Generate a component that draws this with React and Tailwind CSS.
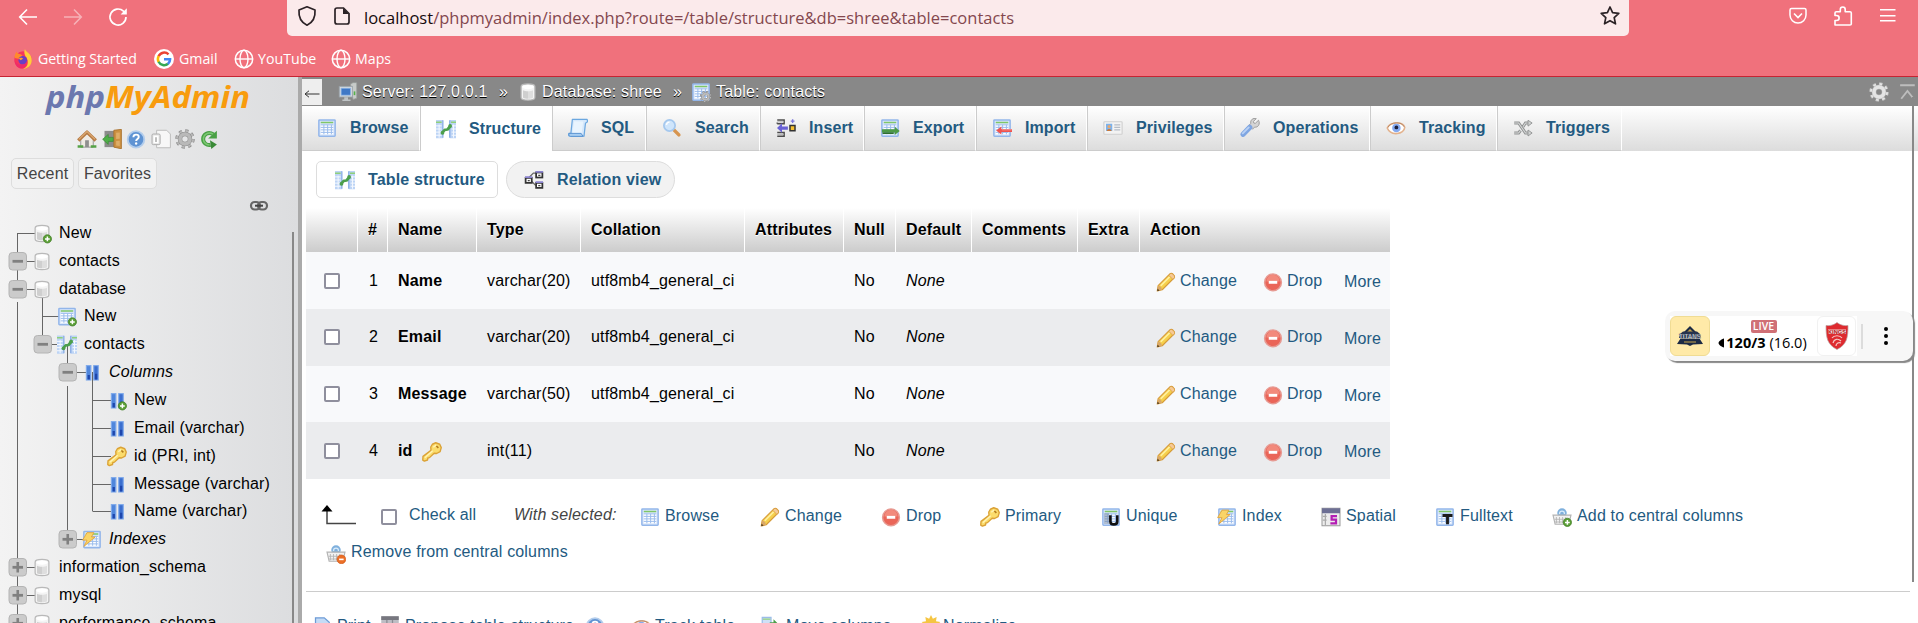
import React from "react";

/* ---------- icons (16-unit grid, drawn at 20px) ---------- */
function Svg({ children, className = "h-5 w-5", box = "0 0 16 16" }) {
  return (
    <svg viewBox={box} className={"shrink-0 " + className} fill="none">
      {children}
    </svg>
  );
}

const Grid = () => (
  <>
    <rect x="1.500" y="1.500" width="13" height="13" rx=".5" fill="#dbe8fb" stroke="#93b6ea" strokeWidth="1.200" />
    <path d="M3 3.600h10" stroke="#7fc668" strokeWidth="1.200" />
    <rect x="3" y="5.400" width="10" height="7.600" fill="#fff" />
    <path d="M3 7.500h10M3 9.500h10M3 11.500h10M5.500 5.400V13M8.500 5.400V13M11.500 5.400V13M3 5.500h10" stroke="#9bbcec" strokeWidth=".8" />
  </>
);
const Plus = () => (
  <>
    <circle cx="12.300" cy="12.300" r="3.300" fill="#5a9e35" stroke="#437f27" strokeWidth=".6" />
    <path d="M12.300 10.400v3.800M10.400 12.300h3.800" stroke="#fff" strokeWidth="1.200" />
  </>
);
const Cyl = () => (
  <>
    <path d="M2.500 3.600C2.500 2.300 5 1.500 8 1.500s5.500.8 5.500 2.100v8.800c0 1.300-2.500 2.100-5.500 2.100s-5.500-.8-5.500-2.100z" fill="#f4f4f4" stroke="#b9b9b9" strokeWidth="1" />
    <path d="M4 6.500v6c1 .6 2.500.9 4 .9V7.300c-1.500 0-3-.3-4-.8z" fill="#cfcfcf" />
    <path d="M8 7.300v6.100c1.500 0 3-.3 4-.9v-6c-1 .5-2.500.8-4 .8z" fill="#dedede" />
    <ellipse cx="8" cy="4" rx="4.600" ry="1.700" fill="#fff" />
  </>
);
const Cols = () => (
  <>
    <rect x="3.500" y="2.500" width="3.600" height="11.500" fill="#4f86dc" stroke="#7fa9ea" strokeWidth=".9" />
    <rect x="9.400" y="2.500" width="3.600" height="11.500" fill="#3b6fcf" stroke="#7fa9ea" strokeWidth=".9" />
    <path d="M4.500 10h1.800v3.500H4.500zM10.400 9h1.800v4.500h-1.800z" fill="#1e46ac" />
  </>
);
const Key = () => (
  <>
    <path d="M8.300 1.800L11 .6l3.200 1.200 1.200 2.700-.9 3.200-2.800 1.500-2-.2-3.700 3.500-1.300.3-.3 1.600-2.500.9-1.300-.8.200-3L7.200 6.700 7 4z" fill="#fbdc6c" stroke="#dba236" strokeWidth="1.100" strokeLinejoin="round" />
    <path d="M2.300 12.600L8.500 7M9 4.200l2.300-1.700" stroke="#fff3b4" strokeWidth="1.200" />
    <path d="M11.500 3.200l1.600 1.500" stroke="#b37a1d" strokeWidth="1.300" />
  </>
);
const Bolt = () => (
  <>
    <Grid />
    <path d="M4 2.500h5.500L7.500 6h3L1.500 13.500 4 8.500H.5z" fill="#f9d468" stroke="#e2a43a" strokeWidth=".7" strokeLinejoin="round" />
  </>
);
const Struct = () => (
  <>
    <path d="M0 .8h5.500v14.500H0zM11 .8h5v14.500h-5z" fill="#bdd4f5" />
    <path d="M5.500 1v14M11 1v14" stroke="#85aae4" strokeWidth="1" />
    <path d="M0 2.500h4.500M12 2.500h4" stroke="#8fd07a" strokeWidth="1.200" />
    <path d="M0 5.500h4.500M0 8h4.500M0 10.500h4.500M0 13h4.500M12.500 5.500H16M12.500 8H16M12.500 10.500H16M12.500 13H16M2.500 4.500V15M14 4.500V15" stroke="#f4f8fe" strokeWidth=".8" />
    <path d="M4.600 11.300L7 8.700l2.200-.3 2.500-3" stroke="#4c9f4c" strokeWidth="2.200" strokeLinejoin="round" />
    <circle cx="5.200" cy="11" r="1.500" fill="#4c9f4c" />
    <circle cx="11.300" cy="5.500" r="1.500" fill="#4c9f4c" />
  </>
);
const Pencil = () => (
  <>
    <path d="M1 15.200l.7-4.300L11.300 1.300c1.500-.9 4.200 1.500 3.300 3.300L5 14.200z" fill="#f6d04c" stroke="#d69b3a" strokeWidth=".9" strokeLinejoin="round" />
    <path d="M3.800 11L11 3.800" stroke="#fff0a0" strokeWidth="1.400" />
    <path d="M10.300 2.700l3.200 3.200 1.300-1.400c.5-1.600-2-4-3.400-3.200z" fill="#f6c995" stroke="#d69b3a" strokeWidth=".6" />
    <path d="M1 15.200l.7-4.300 1.500.5 1 1 .6 1.700z" fill="#d9a868" />
    <path d="M1 15.200l.3-1.900 1.500 1.500z" fill="#3b2a14" />
  </>
);
const DropI = () => (
  <>
    <circle cx="8" cy="8.300" r="6.700" fill="#ea6558" stroke="#e79a92" strokeWidth="1.200" />
    <path d="M2.700 7.500a5.300 5.300 0 0 1 10.600 0z" fill="#f28a7c" />
    <rect x="4.600" y="7.100" width="6.800" height="2.300" fill="#fff" />
  </>
);
const GearI = ({ c = "#b9b9b9", s = "#8d8d8d" }) => (
  <>
    <circle cx="8" cy="8" r="6.500" stroke={s} strokeWidth="2.600" strokeDasharray="2.550 2.550" />
    <circle cx="8" cy="8" r="6.300" stroke={c} strokeWidth="1.800" strokeDasharray="2.100 2.850" strokeDashoffset="-.2" />
    <circle cx="8" cy="8" r="4" stroke={s} strokeWidth="3.600" />
    <circle cx="8" cy="8" r="4" stroke={c} strokeWidth="2.800" />
  </>
);
const HelpI = () => (
  <>
    <circle cx="8" cy="8.300" r="6.600" fill="#5f93d3" stroke="#b3cdec" strokeWidth="1.500" />
    <path d="M5.900 6.500c0-2.700 4.300-2.600 4.300-.1 0 1.600-2.100 1.600-2.100 3.200" stroke="#fff" strokeWidth="1.500" />
    <circle cx="8.100" cy="11.600" r=".95" fill="#fff" />
  </>
);
const HomeI = () => (
  <>
    <path d="M3 8v6.500h10V8L8 3.500z" fill="#f0ebe4" stroke="#9a9a9a" strokeWidth=".8" />
    <path d="M1 9.200L8 2.500l7 6.700" stroke="#b77b43" strokeWidth="2.700" strokeLinejoin="round" />
    <path d="M1.500 8.300L8 2l6.500 6.300" stroke="#dba973" strokeWidth="1" />
    <rect x="6.500" y="9" width="3" height="5.500" fill="#8f8f8f" />
    <path d="M.5 13h4.500v2H.5zM11 13h4.500v2H11z" fill="#55a347" />
  </>
);
const ExitI = () => (
  <>
    <path d="M2 1.500h9v13H2z" fill="#8c8c8c" />
    <path d="M9.500 1l6-.7v15.500l-6-1.300z" fill="#cc9142" stroke="#a8702c" strokeWidth=".7" />
    <path d="M11.300 3l2.900-.3v5l-2.900.2zM11.300 9.500l2.900-.1v4.200l-2.900-.5z" fill="#dfae68" />
    <path d="M.5 8.200L5 4.300v2.400h4v3.200H5v2.400z" fill="#4fae48" stroke="#338a31" strokeWidth=".5" />
  </>
);
const DocI = () => (
  <>
    <path d="M4.500 1h8l3 3v11h-11z" fill="#f7f7f7" stroke="#bdbdbd" strokeWidth=".8" />
    <rect x=".8" y="4" width="6.500" height="8.500" rx="1" fill="#e6e6e6" stroke="#aeaeae" strokeWidth=".8" />
    <rect x="2" y="5.300" width="4" height="6" fill="#fff" />
    <path d="M4 6.500v3.800" stroke="#999" strokeWidth="1" />
  </>
);
const ReloadI = () => (
  <>
    <path d="M10.800 4.300C6.500 1.500 2.500 4.500 2.500 8c0 3.300 3 5.300 6 4.700" stroke="#49a045" strokeWidth="3.200" />
    <path d="M10.500 4.200C6.500 1.800 2.700 4.700 2.700 8c0 3 2.500 4.800 5 4.700" stroke="#7cc873" strokeWidth="1.200" />
    <path d="M6.500 7.500h7V1.300z" fill="#49a045" />
    <path d="M8 9l5.500 3.300L9 16z" fill="#3a8a37" />
  </>
);
const ServerI = () => (
  <>
    <path d="M10 1.500l2-1h3v12.500l-3 1z" fill="#c7cbc9" stroke="#979c9a" strokeWidth=".6" />
    <path d="M13.200 7.500v3" stroke="#55b04b" strokeWidth="1.300" />
    <rect x="1" y="3.500" width="10.500" height="8.500" fill="#d5d9dc" stroke="#99a3ab" strokeWidth=".7" />
    <rect x="2.500" y="5" width="7.500" height="5.500" fill="#3f78c6" stroke="#8ab3e6" strokeWidth=".6" />
    <path d="M5 12.200h3v1.800h2v1.200H3.500V14H5z" fill="#bfc3c5" />
  </>
);
const SqlI = () => (
  <>
    <path d="M3.500 1h11.500c1 1 .8 2.800-1 3l-1.200 10.500H1.500c-1 0-1.200-1.200-.7-2.200h1.500z" fill="#d6e8fb" stroke="#6ba7e0" strokeWidth="1" strokeLinejoin="round" />
    <path d="M4.800 2.500l7.400.3-1.400 9.500H3.500z" fill="#e9f4fe" />
    <path d="M.8 12.300h9.700l1.500 2.400H2c-1 0-1.500-1.200-1.200-2.400z" fill="#a6cdf2" stroke="#5c95d2" strokeWidth=".8" />
  </>
);
const SearchI = () => (
  <>
    <path d="M9.500 9.500l4 4" stroke="#d79550" strokeWidth="2.800" strokeLinecap="round" />
    <circle cx="6" cy="6" r="4.500" fill="#cfe5fb" stroke="#a5c8ee" strokeWidth="1.400" />
    <path d="M3.500 5.500A2.700 2.700 0 0 1 6 3.300" stroke="#fff" strokeWidth="1.200" />
  </>
);
const InsertI = () => (
  <>
    <path d="M1 1.500h5.500v3H1M1 11.500h5.500v3H1M1 4.500v-1M1 14.500h6" stroke="#4c4c4c" strokeWidth="1.200" />
    <path d="M1 3h5M1 13h5" stroke="#bbb" />
    <path d="M.8 8l4-3.800v2.500h4.700v2.600H4.800v2.500z" fill="#6a63d6" />
    <rect x="11.200" y="6" width="4" height="4.200" fill="#f6c02f" stroke="#333" strokeWidth="1.200" />
    <path d="M13.300 1v3M11.800 2.500h3" stroke="#7d79dd" strokeWidth="1.100" />
  </>
);
const ExportI = () => (
  <>
    <Grid />
    <path d="M1.500 9h10.300V7l4 3.300-4 3.200v-2H1.500z" fill="#4d9a47" />
    <path d="M2 11.500h9v1.300H2z" fill="#2f6f2c" />
  </>
);
const ImportI = () => (
  <>
    <Grid />
    <path d="M16 8.900H7.500V6.800L3.300 10l4.200 3.200v-2H16z" fill="#ef5350" />
    <path d="M8 9.500h7.700" stroke="#f9a19b" strokeWidth=".6" />
  </>
);
const PrivI = () => (
  <>
    <rect x=".7" y="3" width="14.600" height="10" rx=".6" fill="#f3f3f3" stroke="#cfcfcf" strokeWidth=".9" />
    <rect x="2.400" y="4.600" width="5" height="5.800" fill="#7db2ec" />
    <circle cx="4.900" cy="6.800" r="1.300" fill="#e8a86c" />
    <path d="M3 10.400c0-2.200 3.800-2.200 3.800 0z" fill="#c9783a" />
    <path d="M9 5.500h4.800M9 7.500h4.800M9 9.500h4.800" stroke="#b5bcc6" strokeWidth=".9" />
  </>
);
const OpsI = () => (
  <>
    <path d="M14.800 1.800l-2.600 2.500-1.200-.3-.2-1.300L13 .5c-2.500-.7-4.800.8-4.400 3.800L7 6l3 3 1.600-1.700c2.900.5 4.800-2.500 3.200-5.500z" fill="#d4d4d4" stroke="#9e9e9e" strokeWidth=".8" />
    <path d="M7.800 7.500L2.500 13" stroke="#7fa6e2" strokeWidth="4.200" strokeLinecap="round" />
    <path d="M7 7.500L2.200 12.300" stroke="#b9d1f5" strokeWidth="1.500" strokeLinecap="round" />
  </>
);
const EyeI = () => (
  <>
    <path d="M1 8C3 3.300 13.500 2.300 15 7.500c-.5 5.500-11 7.500-14 .5z" fill="#fff" stroke="#e3b28d" strokeWidth="1.300" />
    <path d="M1.500 7.500C4 2.800 12.500 2.500 14.500 7" stroke="#b98a69" strokeWidth=".8" />
    <circle cx="8.300" cy="7.900" r="3.400" fill="#85aaf0" />
    <circle cx="8.300" cy="7.500" r="1.500" fill="#1a1f3b" />
  </>
);
const TrigI = () => (
  <>
    <path d="M1 4h3.500l5.500 8h2.500M1 12h3.500l1.500-2M8 7l2-3h2.500" stroke="#8f9191" strokeWidth="2.400" />
    <path d="M1 4h3.500l5.500 8h2.500M1 12h3.500l1.500-2M8 7l2-3h2.500" stroke="#d7d9d9" strokeWidth=".9" />
    <path d="M12 1.800L15.300 4 12 6.500zM12 9.600l3.300 2.400-3.300 2.400z" fill="#d0d2d2" stroke="#8f9191" strokeWidth=".7" />
  </>
);
const RelI = () => (
  <>
    <path d="M4 6L7.500 2.500H10M6 9l3.500 3.500" stroke="#666" />
    <rect x="1.300" y="6.300" width="4.900" height="4" fill="#fff" stroke="#333" strokeWidth="1.400" />
    <rect x="9.700" y="2" width="5" height="4" fill="#fff" stroke="#333" strokeWidth="1.400" />
    <rect x="9.700" y="10.300" width="5" height="4" fill="#fff" stroke="#333" strokeWidth="1.400" />
    <path d="M.8 5.700h5.900M9.200 1.400h6M9.200 9.700h6" stroke="#8a83cf" strokeWidth="1.400" />
    <path d="M3 8.500h1.600M11.400 4.200h1.700M11.400 12.500h1.700" stroke="#444" />
  </>
);
const UniqI = () => (
  <>
    <Grid />
    <path d="M2.500 5v8.500h4V5z" fill="#6c7f9c" opacity=".5" />
    <path d="M7.500 6.500v5c0 3.200 5.500 3.200 5.500 0v-5" stroke="#111" strokeWidth="2.100" />
  </>
);
const SpatI = () => (
  <>
    <rect x=".8" y="1" width="14.400" height="14" fill="#ececec" stroke="#999" strokeWidth=".8" />
    <rect x=".8" y="1" width="14.400" height="4" fill="#6d6f94" />
    <path d="M3.500 5.500v9M1.500 7.500h3M1.500 10.500h3" stroke="#aaa" />
    <path d="M12.800 7.300H8.500v2.800h3.500v3H7.500" stroke="#b41eb4" strokeWidth="1.800" />
  </>
);
const FullI = () => (
  <>
    <Grid />
    <path d="M6 6.800h8M10 6.800v7" stroke="#1c1c1c" strokeWidth="2.300" />
  </>
);
const Basket = ({ kind }) => (
  <>
    <circle cx="8" cy="4.800" r="3.800" fill="#7fb0dd" />
    <path d="M6 5.500c0-3 4-3 4 0" stroke="#d9ebfa" />
    <path d="M.8 6.500h14.400l-1.700 7.300h-11z" fill="#f1f1f1" stroke="#b3b3b3" strokeWidth=".9" />
    <path d="M3.500 8v5M6 8v5M8.500 8v5M11 8v5M2 9.800h12M2.500 12h11" stroke="#b3b3b3" strokeWidth=".7" />
    {kind === "add" ? (
      <Plus />
    ) : (
      <>
        <circle cx="12.300" cy="12.300" r="3.500" fill="#ec6f26" stroke="#cf5716" strokeWidth=".5" />
        <path d="M10.500 12.300h3.600" stroke="#fff" strokeWidth="1.300" />
      </>
    )}
  </>
);
const Globe = () => (
  <Svg box="0 0 20 20" className="h-5 w-5">
    <circle cx="10" cy="10" r="8.700" stroke="#fff" strokeWidth="1.500" />
    <ellipse cx="10" cy="10" rx="4" ry="8.700" stroke="#fff" strokeWidth="1.400" />
    <path d="M1.500 10h17" stroke="#fff" strokeWidth="1.400" />
  </Svg>
);

/* ---------- browser chrome ---------- */
function Chrome() {
  return (
    <header className="flex h-[77px] shrink-0 flex-col border-b border-[#c62433] bg-[#f0717c] font-['Open_Sans','Noto_Sans',sans-serif] tracking-normal">
      <div className="flex h-9">
        <div className="flex w-[287px] gap-[25px] pl-[18px] pt-[7px] text-white">
          <Svg box="0 0 20 20">
            <path d="M19 10H2M9 2.500L1.700 10 9 17.500" stroke="#fff" strokeWidth="1.600" />
          </Svg>
          <Svg box="0 0 20 20" className="h-5 w-5 opacity-45">
            <path d="M1 10h17M11 2.500l7.300 7.500-7.300 7.500" stroke="#fff" strokeWidth="1.600" />
          </Svg>
          <Svg box="0 0 20 20">
            <path d="M18 10a8 8 0 1 1-2.500-5.800L17.500 6" stroke="#fff" strokeWidth="1.700" />
            <path d="M18.800 1.300v6.200h-6.200z" fill="#fff" />
          </Svg>
        </div>
        <div className="flex w-[1342px] rounded-b-[5px] bg-[#fbeaeb]">
          <Svg box="0 0 20 22" className="ml-[10px] mt-[5px] h-[22px] w-5">
            <path d="M10 1.800l8 3.200c.5 6.500-2.300 12.500-8 15.200C4.300 17.500 1.500 11.500 2 5z" stroke="#2b2226" strokeWidth="1.700" strokeLinejoin="round" />
          </Svg>
          <Svg box="0 0 20 20" className="ml-[15px] mt-[6px] h-5 w-5">
            <path d="M5 2h6.500L17 7.500V16a2 2 0 0 1-2 2H5a2 2 0 0 1-2-2V4a2 2 0 0 1 2-2z" stroke="#2b2226" strokeWidth="1.700" />
            <path d="M11 2v6h6z" fill="#2b2226" />
          </Svg>
          <div className="ml-[12px] w-[1226px] whitespace-nowrap pt-[6px] text-[16.500px] leading-6 text-[#84474e]">
            <span className="text-[#15090b]">localhost</span>
            <span>/phpmyadmin/index.php?route=/table/structure&amp;db=shree&amp;table=contacts</span>
          </div>
          <Svg box="0 0 22 22" className="ml-[9px] mt-[5px] h-[22px] w-[22px]">
            <path d="M11 2l2.600 5.700 6.200.7-4.600 4.200 1.300 6.200-5.500-3.100-5.500 3.100 1.300-6.200-4.600-4.200 6.200-.7z" stroke="#2b2226" strokeWidth="1.700" strokeLinejoin="round" />
          </Svg>
        </div>
        <div className="flex gap-[25px] pl-[159px] pt-[6px]">
          <Svg box="0 0 20 20">
            <path d="M3.500 2.500h13a1.500 1.500 0 0 1 1.500 1.500v5a8 8 0 0 1-16 0V4a1.500 1.500 0 0 1 1.500-1.500z" stroke="#fff" strokeWidth="1.500" />
            <path d="M6 7.500l4 4 4-4" stroke="#fff" strokeWidth="1.600" />
          </Svg>
          <Svg box="0 0 20 20" className="h-5 w-5">
            <path d="M2 19v-4.500h1.500c3.500 0 3.500-5 0-5H2V7c0-.8.500-1.300 1.300-1.300h4V3.500c0-3.300 4.900-3.300 4.900 0v2.200H17c.8 0 1.300.5 1.300 1.300V18c0 .7-.5 1-1.300 1z" stroke="#fff" strokeWidth="1.600" strokeLinejoin="round" />
          </Svg>
          <Svg box="0 0 20 20">
            <path d="M2 3.700h15.500M2 9.700h15.500M2 14.700h15.500" stroke="#fff" strokeWidth="1.400" />
          </Svg>
        </div>
      </div>
      <div className="flex pl-[13px] pt-[13px] text-[14.200px] leading-[20px] text-white">
        <div className="flex w-[141px] gap-[5px] whitespace-nowrap">
          <Svg box="0 0 20 20">
            <circle cx="10" cy="11" r="8.700" fill="#f5375c" />
            <path d="M12 0c0 3 7 4 6.800 11.500C18.500 17 14 20 10 19.800c5-1.500 6-7 3.500-11C12 6.500 10.500 4 12 0z" fill="#ffce3b" />
            <path d="M1.500 9c0-3 1-5 2.200-6.200.3 1.500 2 2.200 4.300 2.500L10.500 8 7 10z" fill="#ff8a2b" />
            <circle cx="9.800" cy="11.200" r="4.300" fill="#6a3fc4" />
            <path d="M1.500 11c2 6 10 6.500 12.500 1-.5 6-4 7.700-7 7.200C4 18.500 1.700 15.500 1.500 11z" fill="#f02a6a" />
            <path d="M5.800 9.500c1.500-1.300 3.700-1 4.500.3-1.300 0-1.700 1.200-2.700 1.500z" fill="#ff9d2e" />
          </Svg>
          <span className="tracking-[-0.1px]">Getting Started</span>
        </div>
        <div className="flex w-[80px] gap-[5px]">
          <Svg box="0 0 20 20">
            <circle cx="10" cy="10" r="10" fill="#fff" />
            <path d="M14.500 5.300A6.200 6.200 0 0 0 4.600 7.200" stroke="#ea4335" strokeWidth="2.500" />
            <path d="M4.700 7a6.300 6.300 0 0 0 0 6" stroke="#fbbc05" strokeWidth="2.500" />
            <path d="M4.600 12.800a6.200 6.200 0 0 0 9.500 2" stroke="#34a853" strokeWidth="2.500" />
            <path d="M10 10.200h6.100a6.200 6.200 0 0 1-2.200 4.800" stroke="#4285f4" strokeWidth="2.500" />
          </Svg>
          <span>Gmail</span>
        </div>
        <div className="flex w-[97px] gap-[4px]">
          <Globe />
          <span>YouTube</span>
        </div>
        <div className="flex gap-[4px]">
          <Globe />
          <span>Maps</span>
        </div>
      </div>
    </header>
  );
}

/* ---------- navigation tree ---------- */
// Guide cells: "|" passes through, "+"/"-" expander, "t" branch, "_" blank; then whether the line goes up / down.
function Guide({ kind, up = true, down = true }) {
  const box = kind === "+" || kind === "-";
  return (
    <svg width="25" height="28" viewBox="0 0 25 28" className="shrink-0 overflow-visible" fill="none">
      {kind !== "_" && (
        <path d={`M12.500 ${up ? 0 : 14}V${down ? 28 : 14}`} stroke="#666" />
      )}
      {(box || kind === "t") && <path d="M12.500 14.500H31" stroke="#666" />}
      {box && (
        <>
          <rect x="4" y="5.500" width="17.500" height="17.500" rx="3.500" fill="#cbcbcb" stroke="#b4b4b4" />
          <path d="M7.500 14.300h10.500" stroke="#808080" strokeWidth="2.800" />
          {kind === "+" && <path d="M12.750 9v10.500" stroke="#808080" strokeWidth="2.600" />}
        </>
      )}
    </svg>
  );
}

const tree = [
  { g: [["t", false, true]], icon: <><Cyl /><Plus /></>, t: "New" },
  { g: [["-", true, true]], icon: <Cyl />, t: "contacts" },
  { g: [["-", true, false]], icon: <Cyl />, t: "database", stem: true },
  { g: [["|"], ["t", true, true]], icon: <><Grid /><Plus /></>, t: "New" },
  { g: [["|"], ["-", true, false]], icon: <Struct />, t: "contacts", stem: true },
  { g: [["|"], ["_"], ["-", true, false]], icon: <Cols />, t: "Columns", i: true, stem: true },
  { g: [["|"], ["_"], ["|"], ["t", true, true]], icon: <><Cols /><Plus /></>, t: "New" },
  { g: [["|"], ["_"], ["|"], ["t", true, true]], icon: <Cols />, t: "Email (varchar)" },
  { g: [["|"], ["_"], ["|"], ["t", true, true]], icon: <Key />, t: "id (PRI, int)" },
  { g: [["|"], ["_"], ["|"], ["t", true, true]], icon: <Cols />, t: "Message (varchar)" },
  { g: [["|"], ["_"], ["|"], ["t", true, false]], icon: <Cols />, t: "Name (varchar)" },
  { g: [["|"], ["_"], ["+", true, false]], icon: <Bolt />, t: "Indexes", i: true },
  { g: [["+", true, true]], icon: <Cyl />, t: "information_schema" },
  { g: [["+", true, true]], icon: <Cyl />, t: "mysql" },
  { g: [["+", true, true]], icon: <Cyl />, t: "performance_schema" },
];

function Sidebar() {
  return (
    <aside className="flex w-[302px] shrink-0 flex-col overflow-hidden border-r-4 border-[#aaa] bg-linear-to-r from-[#f3f3f3] to-[#dcdddf]">
      <svg width="210" height="44" viewBox="0 0 210 44" className="ml-[44px] shrink-0 overflow-visible">
        <text x="2" y="30.500" textLength="59" lengthAdjust="spacingAndGlyphs" fill="#6c78af" className="font-['Open_Sans',sans-serif] text-[30px] font-bold italic tracking-normal">php</text>
        <text x="61" y="30.500" textLength="145" lengthAdjust="spacingAndGlyphs" fill="#f89c0e" className="font-['Open_Sans',sans-serif] text-[30px] font-bold italic tracking-normal">MyAdmin</text>
      </svg>
      <div className="flex h-[22px] gap-[4.600px] pl-[77px] pt-[8px]">
        <Svg><HomeI /></Svg>
        <Svg><ExitI /></Svg>
        <Svg><HelpI /></Svg>
        <Svg><DocI /></Svg>
        <Svg><GearI /></Svg>
        <Svg><ReloadI /></Svg>
      </div>
      <div className="flex gap-1 pl-[11px] pt-[15px] text-[#444]">
        <span className="h-[31px] w-[63px] rounded-[5px] border border-[#ddd] bg-[#f2f2f2] text-center leading-[29px]">Recent</span>
        <span className="h-[31px] w-[79px] rounded-[5px] border border-[#ddd] bg-[#f2f2f2] text-center leading-[29px]">Favorites</span>
      </div>
      <div className="flex h-[30px] shrink-0 pl-[249px] pt-[11px]">
        <Svg box="0 0 20 12" className="h-3 w-5">
          <rect x="2" y="2" width="9" height="7.500" rx="3.700" stroke="#666" strokeWidth="2.200" />
          <rect x="9" y="2" width="9" height="7.500" rx="3.700" stroke="#666" strokeWidth="2.200" />
          <path d="M6 5.700h8" stroke="#444" strokeWidth="2" />
        </Svg>
      </div>
      <div className="flex min-h-0 flex-1">
        <ul className="flex w-[292px] flex-col pl-[5px] text-black">
          {tree.map((r, k) => (
            <li key={k} className="flex h-[27.850px] shrink-0 items-center">
              {r.g.map((g, j) => (
                <Guide key={j} kind={g[0]} up={g[1]} down={g[2]} />
              ))}
              <svg width="25" height="28" viewBox="0 0 25 28" className="shrink-0" fill="none">
                {r.stem && <path d="M12.500 14V28" stroke="#666" />}
                <g transform="translate(2 4.500) scale(1.25)">{r.icon}</g>
              </svg>
              <span className={r.i ? "pl-1 italic" : "pl-1"}>{r.t}</span>
            </li>
          ))}
        </ul>
        <div className="mt-[13px] w-[2px] bg-[#888]" />
      </div>
    </aside>
  );
}

/* ---------- main panel ---------- */
const tabs = [
  ["Browse", <Grid />, "w-[118px] pl-[14px]"],
  ["Structure", <Struct />, "w-[132px] pl-[15px]"],
  ["SQL", <SqlI />, "w-[94px] pl-[15px]"],
  ["Search", <SearchI />, "w-[114px] pl-[15px]"],
  ["Insert", <InsertI />, "w-[104px] pl-[15px]"],
  ["Export", <ExportI />, "w-[112px] pl-[15px]"],
  ["Import", <ImportI />, "w-[111px] pl-[15px]"],
  ["Privileges", <PrivI />, "w-[137px] pl-[15px]"],
  ["Operations", <OpsI />, "w-[146px] pl-[15px]"],
  ["Tracking", <EyeI />, "w-[127px] pl-[15px]"],
  ["Triggers", <TrigI />, "w-[125px] pl-[15px]"],
];

function Breadcrumb() {
  return (
    <div className="flex h-[29px] shrink-0 items-center whitespace-nowrap bg-[#888] text-white [text-shadow:0_1px_0_#000]">
      <span className="flex h-[26px] w-5 shrink-0 items-center justify-center bg-[#eee]">
        <Svg box="0 0 16 10" className="mt-1 h-[10px] w-4">
          <path d="M15.500 5H1.500M5 1.800L1 5l4 3.200" stroke="#333" strokeWidth="1" />
        </Svg>
      </span>
      <span className="flex w-[162px] shrink-0 items-center gap-[4px] pl-4"><Svg><ServerI /></Svg>Server: 127.0.0.1</span>
      <span className="w-[34px] shrink-0 pl-[15px]">»</span>
      <span className="flex w-[145px] shrink-0 items-center gap-[4px]"><Svg><Cyl /></Svg>Database: shree</span>
      <span className="w-[28px] shrink-0 pl-[10px]">»</span>
      <span className="flex flex-1 items-center gap-[5px]">
        <Svg>
          <Grid />
          <g transform="translate(7 7) scale(.6)"><GearI c="#bbb" s="#777" /></g>
        </Svg>
        Table: contacts
      </span>
      <Svg><GearI c="#e4e4e4" s="#bcbcbc" /></Svg>
      <Svg box="0 0 16 16" className="ml-[10px] mr-[1px] h-[18px] w-[18px]">
        <path d="M1 2h13M2 14l5.500-7 5.500 7" stroke="#bdbdbd" strokeWidth="1.600" />
      </Svg>
    </div>
  );
}

const cols = "grid grid-cols-[52px_30px_89px_104px_164px_99px_52px_76px_106px_62px_250px]";
const heads = ["", "#", "Name", "Type", "Collation", "Attributes", "Null", "Default", "Comments", "Extra", "Action"];
const rows = [
  ["Name", "varchar(20)", "utf8mb4_general_ci", "h-[57px] pt-[17px]"],
  ["Email", "varchar(20)", "utf8mb4_general_ci", "h-[57px] pt-[16px]"],
  ["Message", "varchar(50)", "utf8mb4_general_ci", "h-[56px] pt-[16px]"],
  ["id", "int(11)", "", "h-[57px] pt-[17px]"],
];
const Box = ({ className = "" }) => (
  <span className={"block h-4 w-4 shrink-0 rounded-[2px] border-2 border-[#8f8f9d] bg-white " + className} />
);

const selected = [
  ["Browse", <Grid />, "w-[120px]"],
  ["Change", <Pencil />, "w-[121px]"],
  ["Drop", <DropI />, "w-[99px]"],
  ["Primary", <Key />, "w-[121px]"],
  ["Unique", <UniqI />, "w-[116px]"],
  ["Index", <Bolt />, "w-[104px]"],
  ["Spatial", <SpatI />, "w-[114px]"],
  ["Fulltext", <FullI />, "w-[117px]"],
  ["Add to central columns", <Basket kind="add" />, "w-[200px]"],
];

function Main() {
  return (
    <main className="flex min-w-0 flex-1 flex-col overflow-hidden bg-white">
      <Breadcrumb />
      <nav className="flex h-[45px] shrink-0 bg-linear-to-b from-white to-[#dcdcdc] font-bold tracking-[0.1px] text-[#235a81]">
        {tabs.map(([label, icon, w]) => (
          <span
            key={label}
            className={
              "flex items-center gap-[13px] border-r border-l border-r-white " + w +
              (label === "Structure" ? " bg-white" : " border-b border-b-[#ccc]") +
              (label === "Browse" ? " border-l-transparent" : " border-l-[#ccc]")
            }
          >
            <Svg>{icon}</Svg>
            {label}
          </span>
        ))}
      </nav>
      <div className="flex w-[1608px] min-h-0 flex-1 flex-col pl-1">
        <div className="flex shrink-0 gap-2 pl-[10px] pt-[10px] font-bold text-[#235a81]">
          <span className="flex h-[37px] w-[182px] items-center gap-[13px] rounded-[5px] border border-[#ddd] bg-white pl-[18px]"><Svg><Struct /></Svg>Table structure</span>
          <span className="flex h-[37px] w-[169px] items-center gap-[13px] rounded-full border border-[#ddd] bg-[#f2f2f2] pl-[17px]"><Svg><RelI /></Svg>Relation view</span>
        </div>
        <div className="mt-[10px] w-[1084px] shrink-0 text-black">
          <div className={cols + " h-[44px] bg-linear-to-b from-white to-[#ccc] font-bold"}>
            {heads.map((h, i) => (
              <span key={i} className={"whitespace-nowrap pl-[10px] pt-[10px] leading-6 [text-shadow:0_1px_0_#fff] " + (i < 10 ? "border-r border-white" : "")}>{h}</span>
            ))}
          </div>
          {rows.map((r, i) => (
            <div key={r[0]} className={cols + " leading-6 " + r[3] + (i % 2 ? " bg-[#ebecee]" : " bg-[#f8f9fb]")}>
              <span className="pl-[18px] pt-[4px]"><Box /></span>
              <span className="pl-[11px]">{i + 1}</span>
              <span className="flex gap-[9px] pl-[10px] font-bold">
                {r[0]}
                {r[0] === "id" && <Svg className="mt-[3px] h-5 w-5"><Key /></Svg>}
              </span>
              <span className="pl-[10px]">{r[1]}</span>
              <span className="pl-[10px]">{r[2]}</span>
              <span />
              <span className="pl-[10px]">No</span>
              <span className="pl-[10px] italic">None</span>
              <span />
              <span />
              <span className="flex whitespace-nowrap pl-[16px] text-[#235a81]">
                <span className="flex w-[107px] shrink-0 gap-[4px]"><Svg className="mt-[3px] h-5 w-5"><Pencil /></Svg>Change</span>
                <span className="flex w-[81px] shrink-0 gap-[4px]"><Svg className="mt-[3px] h-5 w-5"><DropI /></Svg>Drop</span>
                <span className={i === 1 || i === 2 ? "pt-[2px]" : "pt-px"}>More</span>
              </span>
            </div>
          ))}
        </div>
        <div className="flex h-[46px] shrink-0 whitespace-nowrap pl-[14px] pt-[24px] leading-6 text-[#235a81]">
          <Svg box="0 0 38 22" className="mt-px h-[22px] w-[38px]">
            <path d="M7 5v14.500h29" stroke="#444" strokeWidth="1.500" />
            <path d="M1.500 7.500L7 1l5.500 6.500z" fill="#000" />
          </Svg>
          <Box className="ml-[23px] mt-[6px]" />
          <span className="ml-[12px] w-[105px]">Check all</span>
          <span className="w-[126px] italic text-[#444]">With selected:</span>
          {selected.map(([t, icon, w]) => (
            <span key={t} className={"flex shrink-0 gap-[5px] pt-[1px] " + w}>
              <Svg className="mt-[3px] h-5 w-5">{icon}</Svg>
              {t}
            </span>
          ))}
        </div>
        <div className="flex h-[66px] shrink-0 gap-[5px] pl-5 pt-[15px] leading-6 text-[#235a81]">
          <Svg className="mt-[4px] h-5 w-5"><Basket kind="remove" /></Svg>
          <span>Remove from central columns</span>
        </div>
        <div className="h-px shrink-0 bg-[#ccc]" />
        <div className="flex shrink-0 whitespace-nowrap pl-[7px] pt-[22px] leading-6 text-[#235a81]">
          <span className="flex w-[67px] gap-[4px]">
            <Svg className="mt-[2px] h-5 w-5"><path d="M2 1.500h7l4 3.500v9H2z" fill="#c4dbf6" stroke="#6c9bd6" /></Svg>Print
          </span>
          <span className="flex w-[205px] gap-[5px]">
            <Svg className="mt-[1px] h-5 w-5"><rect x="1" y="1" width="14" height="13" fill="#bdbdc4" /><path d="M1 1h14v3H1z" fill="#77777f" /><path d="M1 7.500h14M5.500 4v10M10 4v10" stroke="#8b8b93" /></Svg>Propose table structure
          </span>
          <span className="flex w-[46px]"><Svg className="mt-[2px] h-5 w-5"><HelpI /></Svg></span>
          <span className="flex w-[130px] gap-[4px]"><Svg className="mt-[2px] h-5 w-5"><EyeI /></Svg>Track table</span>
          <span className="flex w-[160px] gap-[5px]">
            <Svg className="mt-[2px] h-5 w-5"><path d="M1 1h7v13H1z" fill="#cfe0f7" stroke="#9bbce9" /><path d="M1.500 2.500h6" stroke="#8fd07a" /><path d="M7 5h3V2.500l4 4-4 4V8H7z" fill="#4c9f4c" /></Svg>Move columns
          </span>
          <span className="flex gap-[2px]">
            <Svg className="mt-[1px] h-5 w-5"><path d="M8 0l1.500 3L12.500 1.500 12 5l3.500.5L13 8l2 3H1l2-3L.5 5.500 4 5l-.5-3.500L6.500 3z" fill="#f5c542" /></Svg>Normalize
          </span>
        </div>
      </div>
    </main>
  );
}

/* ---------- floating score widget ---------- */
function Score() {
  return (
    <div className="absolute left-[1665px] top-[311px] flex h-[50px] w-[248px] items-center rounded-[10px] bg-[#f7f7f7] pl-[5px] font-['Open_Sans',sans-serif] tracking-normal text-black shadow-[2px_2px_1px_#888]">
      <div className="flex h-10 w-[187px] bg-white">
        <span className="flex h-10 w-10 items-center justify-center rounded-[6px] border border-[#f0dc94] bg-[#ffeaa8]">
          <Svg box="0 0 26 20" className="h-5 w-[26px]">
            <path d="M13 0l6 6H7z" fill="#1c2a44" />
            <path d="M13 3l3 3h-6z" fill="#c9a54a" />
            <path d="M3 8l3-2.500h14L23 8l1 4H2z" fill="#26334d" />
            <path d="M0 18l3.500-5.500h19L26 18l-10 .5-3 1.500-3-1.500z" fill="#1c2a44" />
            <path d="M7 16h12" stroke="#c9a54a" strokeWidth="1" />
            <text x="2" y="13" textLength="22" lengthAdjust="spacingAndGlyphs" fill="#fff" stroke="#26334d" strokeWidth=".3" className="font-['Liberation_Sans',sans-serif] text-[8px] font-bold">TITANS</text>
          </Svg>
        </span>
        <span className="flex w-[107px] flex-col items-center pt-[4px]">
          <span className="h-[13px] w-[26px] rounded-[2px] bg-[#d07076] text-center text-[10.500px] font-semibold leading-[13px] text-white">LIVE</span>
          <span className="flex items-center pr-[2px] text-[14.500px] leading-[19px]">
            <Svg box="0 0 6 10" className="mr-[2px] h-[10px] w-[6px]"><path d="M6 .5v9C3.500 9 .5 6.500.5 5S3.500 1 6 .5z" fill="#000" /></Svg>
            <b className="mr-1">120/3</b>(16.0)
          </span>
        </span>
        <span className="flex h-10 w-[39px] items-center justify-center rounded-[6px] border border-[#f1f1f1] bg-white">
          <Svg box="0 0 24 28" className="h-7 w-6">
            <path d="M1 3.500c4 .5 8-.5 11-3 3 2.500 7 3.500 11 3 0 12-1 19-11 24C2 22.500 1 15.500 1 3.500z" fill="#de2a2f" stroke="#b9a2a2" strokeWidth=".7" />
            <path d="M3 7.500h18v4.500H3z" fill="#f4d4d2" />
            <text x="3" y="12" textLength="18" lengthAdjust="spacingAndGlyphs" fill="#b3151b" className="font-['Liberation_Sans',sans-serif] text-[6px] font-bold">KINGS</text>
            <path d="M7 16c2-3 8-3 10 0M8 21c1-4 5-5 8-2M11 24c0-3 3-4 5-3" stroke="#f6c9c6" strokeWidth="1.200" />
          </Svg>
        </span>
      </div>
      <span className="ml-1 h-[25px] w-[2px] bg-[#dcdcdc]" />
      <Svg box="0 0 6 20" className="ml-5 h-5 w-[6px]">
        <circle cx="3" cy="3" r="2" fill="#000" />
        <circle cx="3" cy="10" r="2" fill="#000" />
        <circle cx="3" cy="17" r="2" fill="#000" />
      </Svg>
    </div>
  );
}

export default function App() {
  return (
    <div className="relative flex h-[623px] w-[1918px] flex-col overflow-hidden bg-white font-['Liberation_Sans',Arial,sans-serif] text-[16px] tracking-[0.16px]">
      <Chrome />
      <div className="flex min-h-0 flex-1">
        <Sidebar />
        <Main />
      </div>
      {/* overlay scrollbar thumb of the main panel */}
      <div className="absolute left-[1912px] top-[97px] h-[485px] w-[2px] bg-[#888]" />
      <Score />
    </div>
  );
}
